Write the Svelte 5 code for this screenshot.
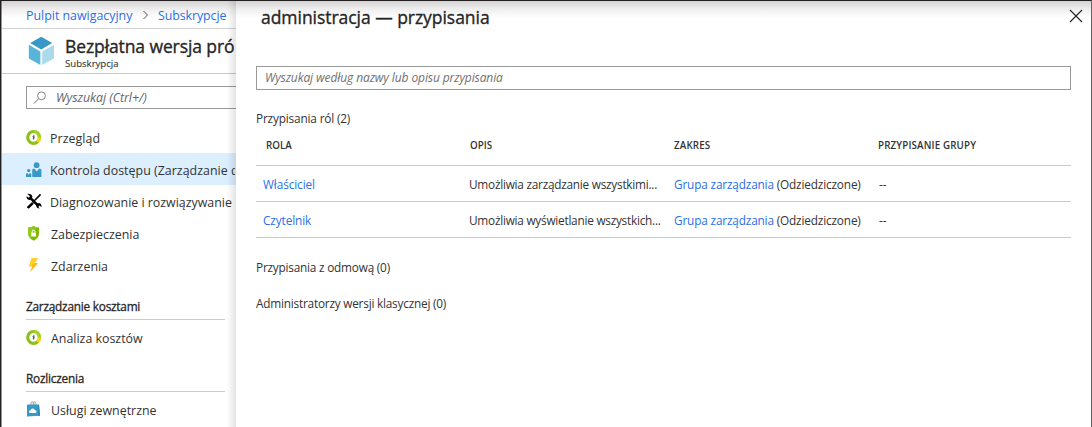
<script>
  const overview = [
    { icon: 'cost', label: 'Przegląd', cls: 'overview' },
    { icon: 'people', label: 'Kontrola dostępu (Zarządzanie d', cls: 'access', active: true },
    { icon: 'tools', label: 'Diagnozowanie i rozwiązywanie', cls: 'diag' },
    { icon: 'shield', label: 'Zabezpieczenia', cls: 'wide' },
    { icon: 'bolt', label: 'Zdarzenia', cls: 'wide' }
  ];
  const sections = [
    { title: 'Zarządzanie kosztami', icon: 'cost', label: 'Analiza kosztów' },
    { title: 'Rozliczenia', icon: 'bag', label: 'Usługi zewnętrzne' }
  ];
  const roles = [
    { role: 'Właściciel', text: 'Umożliwia zarządzanie wszystkimi...' },
    { role: 'Czytelnik', text: 'Umożliwia wyświetlanie wszystkich...' }
  ];
</script>

{#snippet glyph(name)}
  <svg class="glyph" width="16" height="16" viewBox="0 0 16 16">
    {#if name === 'cost'}
      <circle cx="7.6" cy="8.4" r="5.9" fill="#fff" stroke="#8cc11b" stroke-width="3.2" />
      <path d="M7.6 2.5A5.9 5.9 0 0 1 13.5 8.4" fill="none" stroke="#a4d326" stroke-width="3.2" />
      <path d="M13.5 8.4A5.9 5.9 0 0 1 11.4 12.9" fill="none" stroke="#f4d41a" stroke-width="3.2" />
      <path d="M8.7 7.2Q6.8 6.6 6.9 7.6t1.5.8Q8.5 9.9 6.7 9.5M7.7 6.3v4.4" fill="none" stroke="#444" stroke-width=".7" />
    {:else if name === 'people'}
      <g fill="#3999c6">
        <circle cx="10.6" cy="4.2" r="2.9" />
        <path d="M6.2 15.9V9.2q0-1.4 1.4-1.4h1l2.2 2.8L13 7.8h1q1.4 0 1.4 1.4v6.7z" />
        <circle cx="2.7" cy="9.6" r="1.7" />
        <path d="M0 15.9v-2.6q0-1 1-1h.6l1.1 1.2 1.1-1.2h.5q1 0 1 1v2.6z" />
      </g>
    {:else if name === 'tools'}
      <path d="M3.8 4.4 12.8 13.4" stroke="#000" stroke-width="2.6" />
      <path d="M1.4.9 4 3.2 3 4.8.6 3.2Q.2 6.4 3.4 6.9L5.8 6.2 6.4 3.5Q5.6.6 1.4.9zM10.8 10.4l2.3-.4Q15.8 10.8 15.5 14l-2.3-1.6-1.2 1.2 1.7 2Q10.3 15.5 10.1 12z" />
      <path d="M14.6 1.4 6.8 9.2" stroke="#000" stroke-width="1.5" />
      <path d="M6.1 9.1 7.8 10.7 3 15.4Q1.5 15.8.8 14z" />
    {:else if name === 'shield'}
      <path d="M7.6 1Q10.1 2.8 13 2.6V8.4q0 4.5-5.4 7.4Q2.2 12.9 2.2 8.4V2.6Q5.1 2.8 7.6 1z" fill="#7fba00" />
      <path d="M7.6 1Q5.1 2.8 2.2 2.6v5.8q0 3 2.2 5L10.4 2.4Q9 2 7.6 1z" fill="#91c91b" />
      <path d="M5.2 7.7h4.8v3.8H5.2z" fill="#fff" />
      <path d="M6.2 7.9V6.6q0-1.4 1.4-1.4T9 6.6v1.3" fill="none" stroke="#fff" stroke-width="1" />
    {:else if name === 'bolt'}
      <path d="M5.6 1.2h6.2L9 6h3.1L3.9 15.3 6.2 9.2H3z" fill="#fcb813" />
      <path d="M5.6 1.2h6.2L9 6 4.4 9.2H3z" fill="#ffd02e" />
    {:else}
      <path d="M5 4V2Q5 .8 6.4 .8t1.4 1.2v2M7.2 4V2Q7.2.8 8.4 .8t1.5 1.2v2" fill="none" stroke="#999" stroke-width=".9" />
      <path d="M1 3.6h12l1 11.2-13 .6z" fill="#3999c6" />
      <path d="M12.6 3.6h.4l1 11.2-1.7.1z" fill="#2d85b0" />
      <path d="M4.4 12.1q-1.4 0-1.4-1.3t1.4-1.3Q4.8 7.4 6.6 7.4q1.9 0 2.3 1.9 1.6 0 1.6 1.4t-1.6 1.4z" fill="#fff" />
    {/if}
  </svg>
{/snippet}

<div class="portal">
  <aside>
    <nav class="crumbs">
      <a class="c1">Pulpit nawigacyjny</a>
      <svg width="7" height="10" viewBox="0 0 7 10"><path d="M1.5 1 5.5 5 1.5 9" fill="none" stroke="#555" /></svg>
      <a class="c2">Subskrypcje</a>
    </nav>
    <header class="resource">
      <svg width="28" height="30" viewBox="0 0 28 30">
        <path d="M14.2 .8 25.2 7 14.2 13.4 3.2 7z" fill="#3999c6" />
        <path d="M1.8 8.8 13.4 15.5V29L1.8 22.4z" fill="#59b4d9" />
        <path d="M27 8.8 15.2 15.5V29L27 22.4z" fill="#abdaec" />
      </svg>
      <div class="names">
        <h1>Bezpłatna wersja pró</h1>
        <p>Subskrypcja</p>
      </div>
    </header>
    <div class="filter">
      <svg width="14" height="14" viewBox="0 0 14 14"><circle cx="8.5" cy="4.8" r="3.9" fill="none" stroke="#777" stroke-width=".9" /><path d="M5.6 7.8.8 12.6" stroke="#777" /></svg>
      <span>Wyszukaj (Ctrl+/)</span>
    </div>
    <ul class="menu">
      {#each overview as item}
        <li class:active={item.active}>{@render glyph(item.icon)}<span class={item.cls}>{item.label}</span></li>
      {/each}
    </ul>
    {#each sections as s}
      <section class="group">
        <h2>{s.title}</h2>
        <div class="entry">{@render glyph(s.icon)}<span>{s.label}</span></div>
      </section>
    {/each}
  </aside>

  <main>
    <div class="bar">
      <h1>administracja — przypisania</h1>
      <svg width="14" height="14" viewBox="0 0 14 14"><path d="M1 1 13 13M13 1 1 13" stroke="#222" stroke-width="1.1" /></svg>
    </div>
    <div class="search"><span>Wyszukaj według nazwy lub opisu przypisania</span></div>
    <p class="count roles"><span>Przypisania ról (2)</span></p>
    <div class="table">
      <div class="row head"><span class="h1">ROLA</span><span class="h2">OPIS</span><span class="h3">ZAKRES</span><span class="h4">PRZYPISANIE GRUPY</span></div>
      {#each roles as r}
        <div class="row">
          <a class="role">{r.role}</a>
          <span class="desc">{r.text}</span>
          <span class="scope"><a>Grupa zarządzania</a> (Odziedziczone)</span>
          <span class="dash">--</span>
        </div>
      {/each}
    </div>
    <p class="count deny"><span>Przypisania z odmową (0)</span></p>
    <p class="count classic"><span>Administratorzy wersji klasycznej (0)</span></p>
  </main>
</div>

<style>
  :global(body) { margin: 0; overflow: hidden; }
  * { box-sizing: border-box; }
  h1, h2, p, ul { margin: 0; padding: 0; font-weight: 400; }
  a { color: #2a6fe8; }
  .portal {
    position: relative; display: flex; width: 1092px; height: 427px; overflow: hidden;
    border: solid #231f20; border-width: 1px 1px 0 1px; border-right-color: #666;
    background: #fff; color: #333; font: 12.4px/18px "Open Sans", "Noto Sans", sans-serif;
    white-space: nowrap;
  }
  .portal::before {
    content: ""; position: absolute; inset: 0 0 auto 0; height: 17px; z-index: 2;
    background: linear-gradient(rgba(35, 31, 32, .2), rgba(35, 31, 32, .07) 50%, transparent);
    pointer-events: none;
  }
  aside { position: relative; width: 235px; flex: none; overflow: hidden; border-left: 1px solid #999; }
  aside::after {
    content: ""; position: absolute; inset: 0 0 0 auto; width: 9px;
    background: linear-gradient(90deg, transparent, rgba(0, 0, 0, .11));
  }
  .crumbs { display: flex; align-items: center; height: 28px; padding-left: 24px; border-bottom: 1px solid #d2d2d2; }
  .crumbs svg { margin: 1px 9px 0 10px; }
  .crumbs a { padding-top: 2px; }
  .c1 { width: 106px; }
  .c2 { letter-spacing: -.08px; }
  .resource { display: flex; height: 45px; padding: 7px 0 0 25px; border-bottom: 1px solid #c8c8c8; }
  .resource svg { flex: none; }
  .names { padding-left: 10px; }
  .names h1, .bar h1 { font-size: 17.5px; color: #262626; -webkit-text-stroke: .35px #262626; }
  .names h1 { line-height: 20px; letter-spacing: -.1px; }
  .names p { font-size: 9.6px; line-height: 13px; margin-top: 1px; -webkit-text-stroke: .1px #333; }
  .filter { display: flex; align-items: center; width: 230px; height: 23px; margin: 12px 0 0 24px; padding-left: 6px; border: 1px solid #999; color: #666; font-style: italic; font-size: 12.4px; }
  .filter span { margin-left: 9px; padding-top: 1px; letter-spacing: -.05px; }
  .menu { list-style: none; padding-top: 12px; }
  .menu li, .entry { display: flex; align-items: center; height: 32px; padding-left: 24px; gap: 8px; }
  .menu li span, .entry span { padding-top: 3px; }
  .menu .overview { letter-spacing: .06px; }
  .menu .access { width: 185px; overflow: hidden; letter-spacing: .03px; }
  .menu .wide { padding-left: 1px; }
  .glyph { flex: none; display: block; }
  .active { background: #dcefff; }
  .group { padding-top: 16px; }
  .group h2 { height: 23px; width: 199px; margin-left: 24px; border-bottom: 1px solid #ccc; font-size: 11.8px; line-height: 18px; letter-spacing: -.22px; color: #262626; -webkit-text-stroke: .3px #262626; }
  .entry { height: 33px; gap: 9px; padding-top: 1px; }
  main { flex: 1; padding: 0 20px; }
  .bar { display: flex; justify-content: space-between; height: 65px; padding: 4px 0 0 5px; }
  .bar h1 { line-height: 24px; letter-spacing: -.04px; }
  .bar svg { margin: 4px -12px 0 0; }
  .search { height: 24px; padding-left: 8px; border: 1px solid #999; line-height: 22px; font-size: 12px; letter-spacing: -.1px; font-style: italic; color: #707070; }
  .count { font-size: 11.8px; line-height: 18px; letter-spacing: -.21px; }
  .roles { margin-top: 19px; letter-spacing: -.16px; }
  .row { display: grid; grid-template-columns: 213px 205px 204px 1fr; height: 36px; align-items: center; border-bottom: 1px solid #c8c8c8; font-size: 11.8px; }
  .row.head { height: 39px; padding-bottom: 1px; font-size: 9.8px; font-weight: 600; }
  .h1 { padding-left: 10px; }
  .h2 { padding-left: 1px; }
  .h3, .h4 { letter-spacing: .14px; }
  .role { padding-left: 7px; letter-spacing: -.1px; }
  .desc { letter-spacing: -.24px; }
  .scope { letter-spacing: -.16px; }
  .dash { padding-left: 1px; }
  .deny { margin-top: 20px; }
  .classic { margin-top: 18px; }
</style>
